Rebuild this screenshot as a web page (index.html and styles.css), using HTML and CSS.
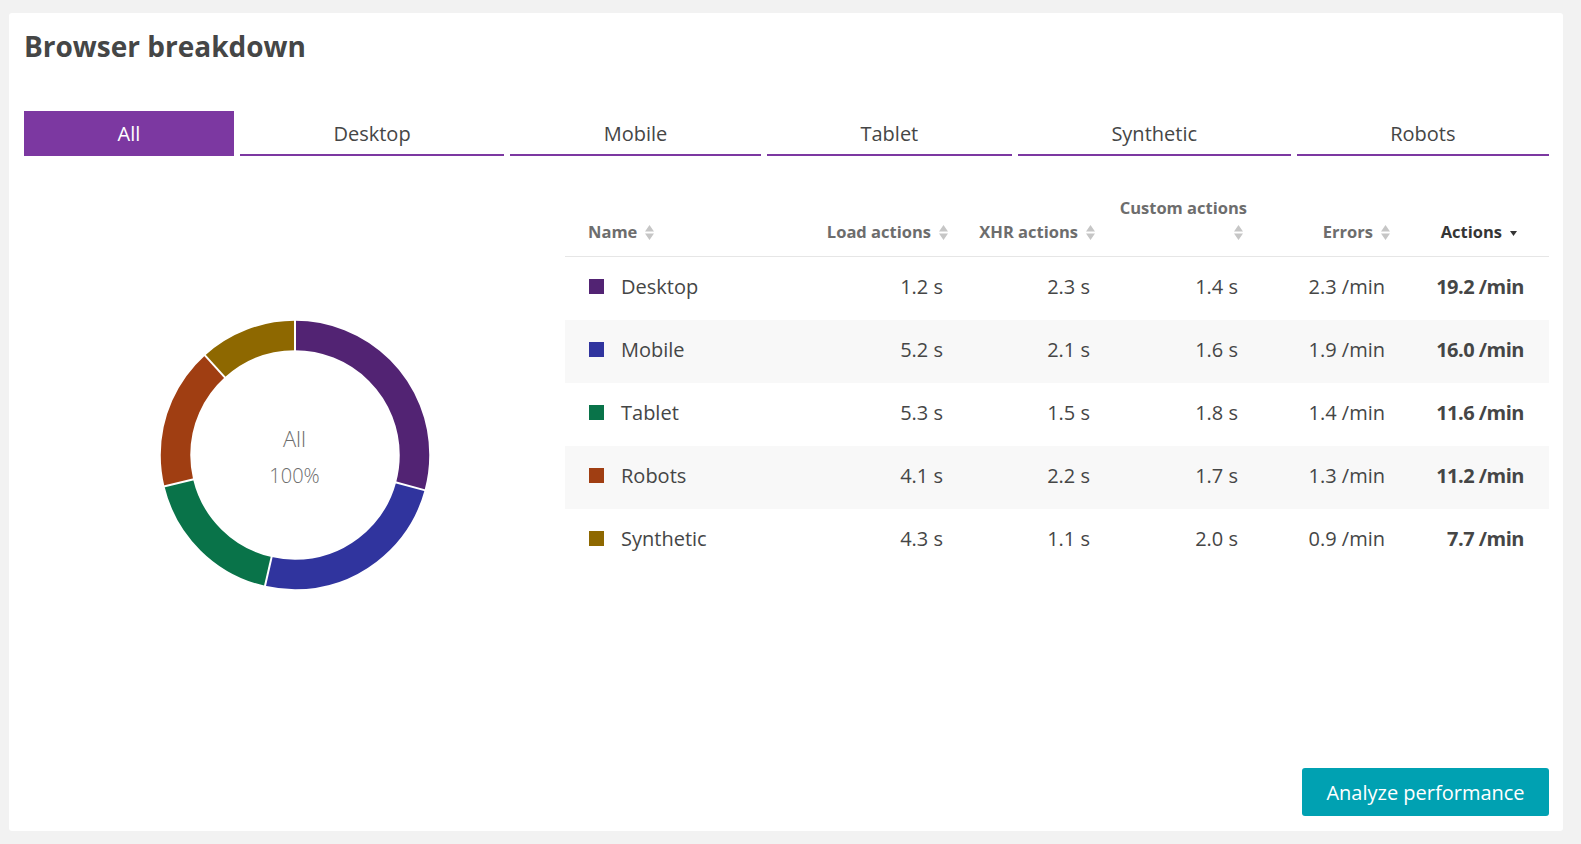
FILE: index.html
```html
<!DOCTYPE html>
<html lang="en">
<head>
<meta charset="utf-8">
<title>Browser breakdown</title>
<link rel="stylesheet" href="styles.css">
</head>
<body>
<div class="card">
  <h1 class="title">Browser breakdown</h1>
  <div class="tabs">
    <div class="tab active">All</div>
    <div class="tab">Desktop</div>
    <div class="tab">Mobile</div>
    <div class="tab">Tablet</div>
    <div class="tab">Synthetic</div>
    <div class="tab">Robots</div>
  </div>
  <div class="content">
    <div class="chart">
      <div class="donut">
        <svg width="270" height="270" viewBox="-135 -135 270 270">
          <g fill="none" stroke-width="29.5" transform="rotate(-90)">
            <circle r="119.5" stroke="#522373" pathLength="360" stroke-dasharray="105.2 254.8" stroke-dashoffset="0"/>
            <circle r="119.5" stroke="#30349e" pathLength="360" stroke-dasharray="87.7 272.3" stroke-dashoffset="-105.2"/>
            <circle r="119.5" stroke="#097349" pathLength="360" stroke-dasharray="63.6 296.4" stroke-dashoffset="-192.9"/>
            <circle r="119.5" stroke="#a03e12" pathLength="360" stroke-dasharray="61.4 298.6" stroke-dashoffset="-256.5"/>
            <circle r="119.5" stroke="#8e6800" pathLength="360" stroke-dasharray="42.1 317.9" stroke-dashoffset="-317.9"/>
          </g>
          <g stroke="#fff" stroke-width="2">
            <line x1="0" y1="-103" x2="0" y2="-136" transform="rotate(0)"/>
            <line x1="0" y1="-103" x2="0" y2="-136" transform="rotate(105.2)"/>
            <line x1="0" y1="-103" x2="0" y2="-136" transform="rotate(192.9)"/>
            <line x1="0" y1="-103" x2="0" y2="-136" transform="rotate(256.5)"/>
            <line x1="0" y1="-103" x2="0" y2="-136" transform="rotate(317.9)"/>
          </g>
        </svg>
        <div class="donut-label">
          <div class="donut-name">All</div>
          <div class="donut-pct">100%</div>
        </div>
      </div>
    </div>
    <table class="grid">
      <colgroup>
        <col class="c-name"><col class="c-num"><col class="c-num"><col class="c-custom"><col class="c-num"><col class="c-act">
      </colgroup>
      <thead>
        <tr>
          <th class="h-name">Name<svg class="sort" width="9" height="15" viewBox="0 0 9 15"><path d="M4.5 0L9 6.5H0z M0 8.5h9L4.5 15z"/></svg></th>
          <th class="h-num">Load actions<svg class="sort" width="9" height="15" viewBox="0 0 9 15"><path d="M4.5 0L9 6.5H0z M0 8.5h9L4.5 15z"/></svg></th>
          <th class="h-num">XHR actions<svg class="sort" width="9" height="15" viewBox="0 0 9 15"><path d="M4.5 0L9 6.5H0z M0 8.5h9L4.5 15z"/></svg></th>
          <th class="h-num">Custom actions<br><svg class="sort" width="9" height="15" viewBox="0 0 9 15"><path d="M4.5 0L9 6.5H0z M0 8.5h9L4.5 15z"/></svg></th>
          <th class="h-num">Errors<svg class="sort" width="9" height="15" viewBox="0 0 9 15"><path d="M4.5 0L9 6.5H0z M0 8.5h9L4.5 15z"/></svg></th>
          <th class="h-num h-active">Actions<svg class="sort-down" width="7" height="5" viewBox="0 0 7 5"><path d="M0 0h7L3.5 5z"/></svg></th>
        </tr>
      </thead>
      <tbody>
        <tr>
          <td class="name"><span class="sw sw-desktop"></span>Desktop</td>
          <td class="num">1.2 s</td><td class="num">2.3 s</td><td class="num">1.4 s</td><td class="num">2.3 /min</td><td class="num strong">19.2 /min</td>
        </tr>
        <tr class="stripe">
          <td class="name"><span class="sw sw-mobile"></span>Mobile</td>
          <td class="num">5.2 s</td><td class="num">2.1 s</td><td class="num">1.6 s</td><td class="num">1.9 /min</td><td class="num strong">16.0 /min</td>
        </tr>
        <tr>
          <td class="name"><span class="sw sw-tablet"></span>Tablet</td>
          <td class="num">5.3 s</td><td class="num">1.5 s</td><td class="num">1.8 s</td><td class="num">1.4 /min</td><td class="num strong">11.6 /min</td>
        </tr>
        <tr class="stripe">
          <td class="name"><span class="sw sw-robots"></span>Robots</td>
          <td class="num">4.1 s</td><td class="num">2.2 s</td><td class="num">1.7 s</td><td class="num">1.3 /min</td><td class="num strong">11.2 /min</td>
        </tr>
        <tr>
          <td class="name"><span class="sw sw-synthetic"></span>Synthetic</td>
          <td class="num">4.3 s</td><td class="num">1.1 s</td><td class="num">2.0 s</td><td class="num">0.9 /min</td><td class="num strong">7.7 /min</td>
        </tr>
      </tbody>
    </table>
  </div>
  <div class="footer">
    <button class="btn" type="button">Analyze performance</button>
  </div>
</div>
</body>
</html>
```
FILE: styles.css
```css
html, body {
  margin: 0;
  padding: 0;
  background: #f2f2f2;
}
body {
  font-family: "Open Sans", "Noto Sans", sans-serif;
  color: #454646;
}
.card {
  box-sizing: border-box;
  margin: 13px 0 0 9px;
  width: 1554px;
  height: 818px;
  background: #fff;
  border-radius: 3px;
  padding: 14px 14px 15px 15px;
  display: flex;
  flex-direction: column;
}
.title {
  margin: 0;
  font-size: 28px;
  line-height: 38px;
  font-weight: 700;
  color: #454646;
}
.tabs {
  display: flex;
  gap: 6px;
  margin-top: 46px;
  width: 1525px;
}
.tab {
  flex: 1 1 auto;
  height: 45px;
  box-sizing: border-box;
  display: flex;
  align-items: center;
  justify-content: center;
  font-size: 20px;
  color: #454646;
  border-bottom: 2px solid #7c38a1;
  padding-top: 2px;
}
.tab.active {
  background: #7c38a1;
  color: #fff;
}
.content {
  display: flex;
  width: 1525px;
}
.chart {
  flex: 0 0 541px;
  display: flex;
  justify-content: center;
  padding-top: 164px;
}
.donut {
  position: relative;
  width: 270px;
  height: 270px;
}
.donut svg {
  display: block;
}
.donut-label {
  position: absolute;
  inset: 0;
  padding-top: 4px;
  display: flex;
  flex-direction: column;
  align-items: center;
  justify-content: center;
  color: #6d6d6d;
  font-weight: 300;
}
.donut-name {
  font-size: 22px;
  line-height: 30px;
}
.donut-pct {
  font-size: 20px;
  line-height: 30px;
  margin-top: 8px;
}
.grid {
  flex: 0 0 984px;
  width: 984px;
  table-layout: fixed;
  border-collapse: collapse;
  margin-top: 36px;
  align-self: flex-start;
}
.c-name { width: 256px; }
.c-num { width: 147px; }
.c-custom { width: 148px; }
.c-act { width: 139px; }
th {
  font-size: 16.5px;
  font-weight: 700;
  color: #6d6d6d;
  line-height: 24px;
  vertical-align: bottom;
  padding: 4px 16px 12px 0;
  border-bottom: 1px solid #e6e6e6;
  white-space: nowrap;
}
.h-name {
  text-align: left;
  padding-left: 23px;
}
.h-num {
  text-align: right;
}
.h-active {
  color: #353535;
  padding-right: 32px;
}
.sort {
  display: inline-block;
  fill: #c6c6c6;
  margin-left: 8px;
  margin-right: 4px;
  vertical-align: -2px;
}
.sort-down {
  display: inline-block;
  fill: #353535;
  margin-left: 8px;
  vertical-align: 2px;
}
td {
  box-sizing: border-box;
  height: 63px;
  font-size: 20px;
  color: #454646;
  padding: 0 25px 4px 0;
  white-space: nowrap;
}
.stripe td {
  background: #f8f8f8;
}
.name {
  padding-left: 24px;
}
.num {
  text-align: right;
}
.strong {
  font-weight: 700;
  letter-spacing: -0.5px;
}
.sw {
  display: inline-block;
  width: 15px;
  height: 15px;
  margin-right: 17px;
  vertical-align: 0;
}
.sw-desktop { background: #522373; }
.sw-mobile { background: #30349e; }
.sw-tablet { background: #097349; }
.sw-robots { background: #a03e12; }
.sw-synthetic { background: #8e6800; }
.footer {
  margin-top: auto;
  display: flex;
  justify-content: flex-end;
  width: 1525px;
}
.btn {
  width: 247px;
  height: 48px;
  border: 0;
  border-radius: 3px;
  background: #00a1b2;
  color: #fff;
  font-family: "Open Sans", "Noto Sans", sans-serif;
  font-size: 20px;
  padding: 0;
  cursor: pointer;
}
```
